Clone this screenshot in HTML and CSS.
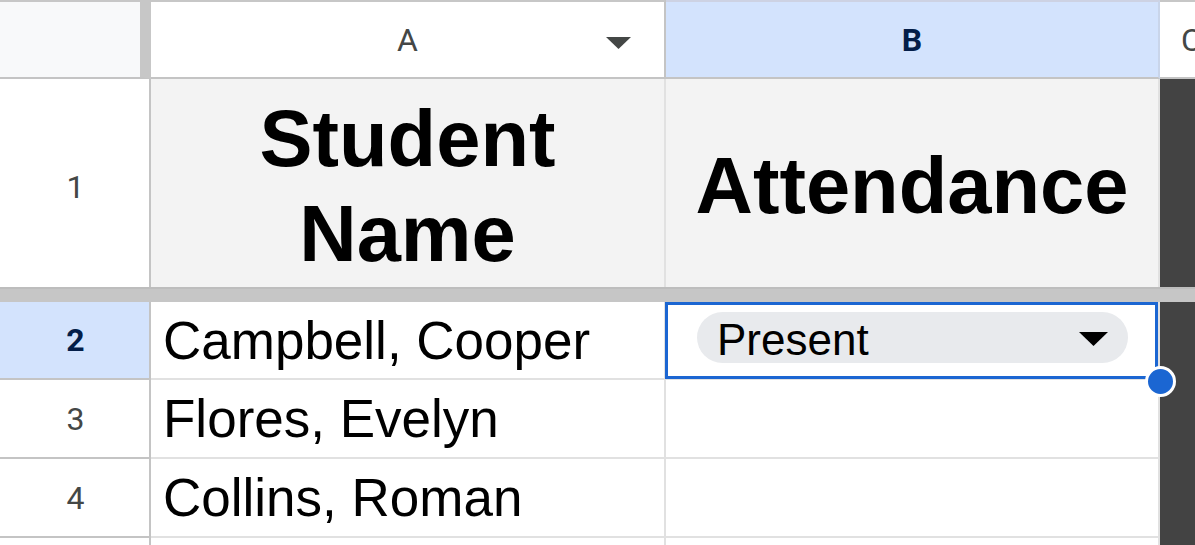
FILE: index.html
```html
<!DOCTYPE html>
<html lang="en">
<head>
<meta charset="utf-8">
<title>Attendance sheet</title>
<link rel="stylesheet" href="styles.css">
</head>
<body>
<div class="sheet">
  <div class="corner"></div>
  <div class="colhead colhead-a"><span class="colhead-label">A</span>
    <svg class="colhead-caret" width="25" height="12" viewBox="0 0 25 12"><polygon points="0,0 25,0 12.5,12" fill="#444746"/></svg>
  </div>
  <div class="colhead colhead-b selected-head">B</div>
  <div class="colhead colhead-c">C</div>

  <div class="rowhead rowhead-tall">1</div>
  <div class="cell cell-header">Student Name</div>
  <div class="cell cell-header">Attendance</div>
  <div class="dark"></div>

  <div class="freeze"></div>

  <div class="rowhead selected-head">2</div>
  <div class="cell cell-text">Campbell, Cooper</div>
  <div class="cell cell-active">
    <div class="chip"><span class="chip-label">Present</span>
      <svg class="chip-caret" width="29" height="14" viewBox="0 0 29 14"><polygon points="0,0 29,0 14.5,14" fill="#000"/></svg>
    </div>
    <span class="fill-handle"></span>
  </div>
  <div class="dark dark-long"></div>

  <div class="rowhead">3</div>
  <div class="cell cell-text">Flores, Evelyn</div>
  <div class="cell"></div>

  <div class="rowhead">4</div>
  <div class="cell cell-text">Collins, Roman</div>
  <div class="cell"></div>

  <div class="rowhead"></div>
  <div class="cell"></div>
  <div class="cell"></div>
</div>
</body>
</html>
```

FILE: styles.css
```css
html, body {
  margin: 0;
  padding: 0;
  background: #ffffff;
}

.sheet {
  display: grid;
  grid-template-columns: 151px 515px 494px 35px;
  grid-template-rows: 79px 208px 15px 78px 79px 79px 40px;
  width: 1195px;
  height: 545px;
  overflow: hidden;
  font-family: "Liberation Sans", Arial, sans-serif;
  color: #000;
}

.sheet > div {
  box-sizing: border-box;
}

.corner {
  background: #f8f9fa;
  border-top: 2px solid #c7c7c7;
  border-bottom: 2px solid #c4c4c4;
  border-right: 11px solid #c7c7c7;
}

.colhead {
  display: flex;
  align-items: center;
  justify-content: center;
  border-top: 2px solid #c7c7c7;
  border-bottom: 2px solid #c4c4c4;
  border-right: 2px solid #c4c4c4;
  font-family: Roboto, "Liberation Sans", sans-serif;
  font-size: 32px;
  color: #444746;
  background: #ffffff;
}

.colhead-a {
  position: relative;
}

.colhead-caret {
  position: absolute;
  right: 33px;
  top: 35px;
}

.selected-head {
  background: #d3e3fd;
  color: #041e49;
  font-weight: bold;
}

.colhead-b {
  border-right: 2px solid #c9d5ea;
  border-top-color: #cdd2e3;
}

.colhead-c {
  justify-content: flex-start;
  padding-left: 21px;
  border-right: none;
  overflow: hidden;
}

.rowhead {
  display: flex;
  align-items: center;
  justify-content: center;
  padding-left: 2px;
  border-right: 2px solid #c4c4c4;
  border-bottom: 2px solid #c4c4c4;
  font-family: Roboto, "Liberation Sans", sans-serif;
  font-size: 32px;
  color: #444746;
}

.rowhead.selected-head {
  color: #041e49;
  background: #d3e3fd;
}

.rowhead-tall {
  border-bottom: none;
  padding-top: 8px;
}

.cell {
  border-right: 2px solid #e1e1e1;
  border-bottom: 2px solid #e1e1e1;
  background: #ffffff;
}

.cell-header {
  display: flex;
  align-items: center;
  justify-content: center;
  text-align: center;
  padding: 5px 0 0;
  background: #f3f3f3;
  border-bottom: none;
  font-weight: bold;
  font-size: 79.5px;
  line-height: 95px;
}

.cell-text {
  display: flex;
  align-items: center;
  padding-left: 12px;
  font-size: 53px;
  white-space: nowrap;
  overflow: hidden;
}

.dark {
  background: #434343;
}

.dark-long {
  grid-row: 4 / span 4;
  grid-column: 4;
}

.freeze {
  grid-column: 1 / -1;
  background: #c6c6c6;
  border-top: 2px solid #bdbdbd;
}

.cell-active {
  position: relative;
  z-index: 2;
  padding: 10px 0 0 31px;
}

.cell-active::after {
  content: "";
  position: absolute;
  left: -1px;
  top: 0;
  right: 0;
  bottom: -1px;
  border: 3px solid #1b66d2;
  pointer-events: none;
}

.chip {
  display: flex;
  align-items: center;
  justify-content: space-between;
  width: 431px;
  height: 51px;
  box-sizing: border-box;
  padding: 0 20px 0 20px;
  border-radius: 26px;
  background: #e8eaed;
  font-size: 44px;
  color: #000;
}

.chip-label {
  padding-top: 4px;
}

.chip-caret {
  margin-top: 3px;
}

.fill-handle {
  position: absolute;
  right: -18px;
  bottom: -19px;
  width: 25px;
  height: 25px;
  border-radius: 50%;
  background: #1b66d2;
  border: 3px solid #ffffff;
  z-index: 3;
}
```
